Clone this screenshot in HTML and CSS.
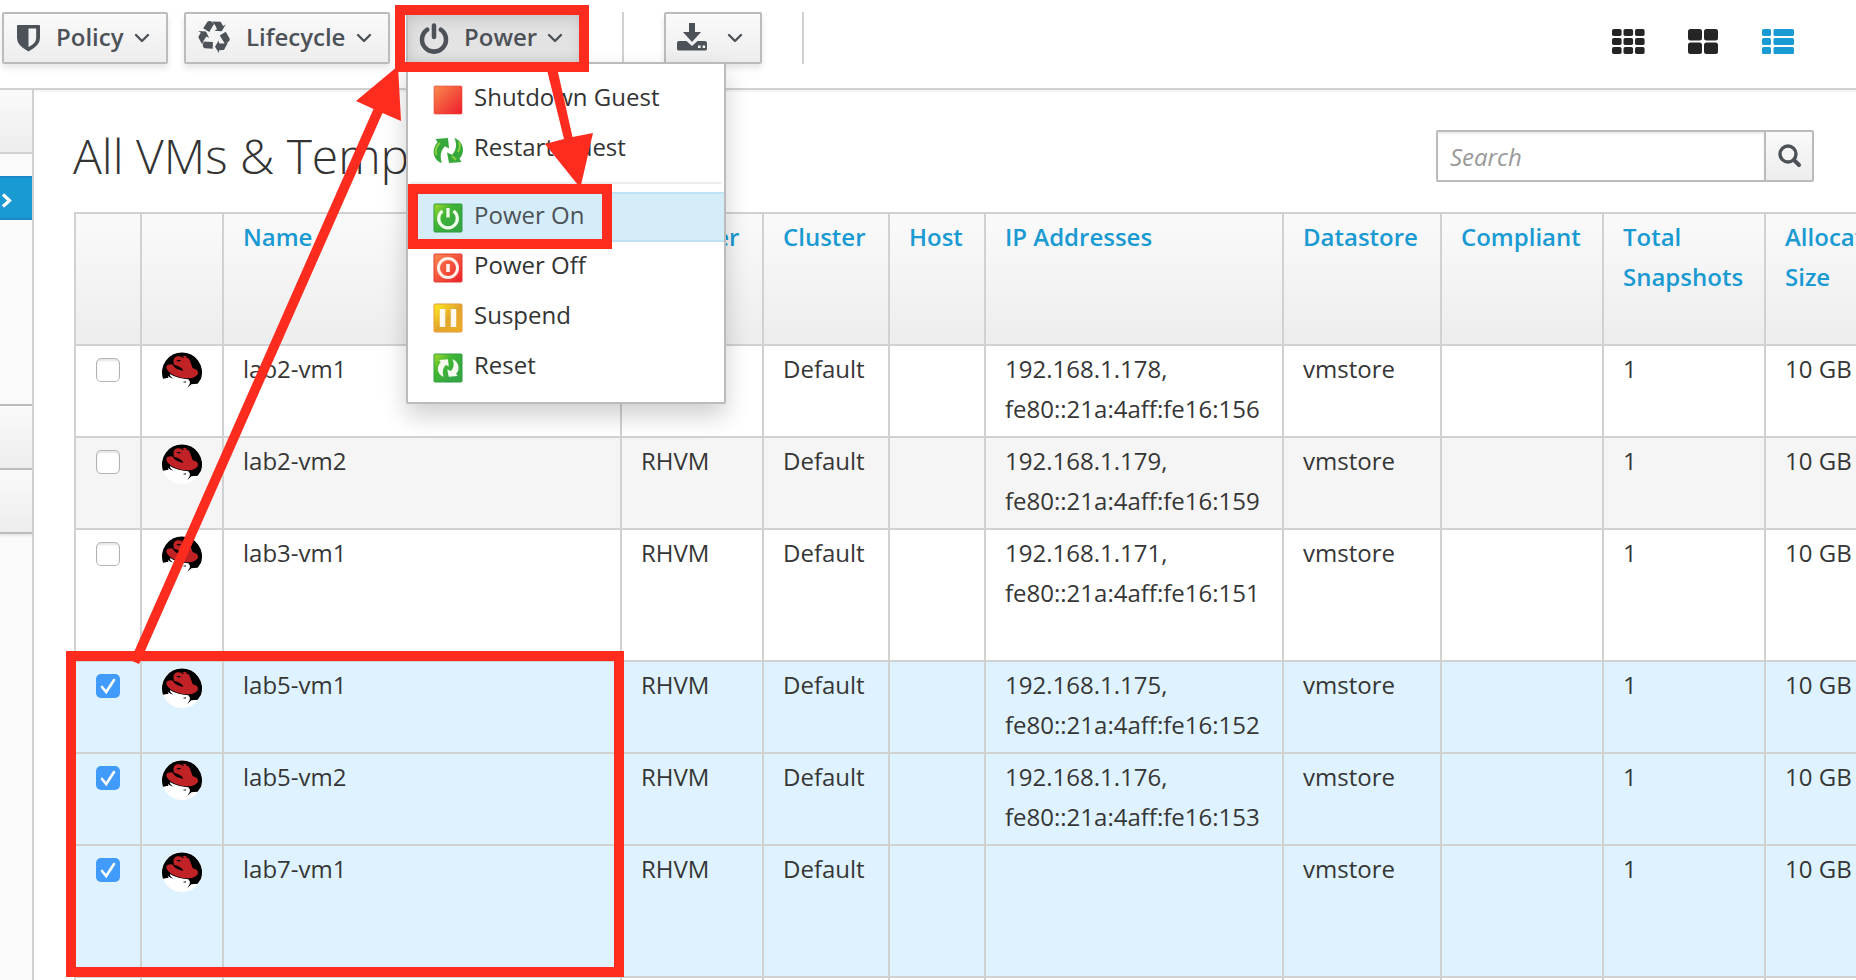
FILE: index.html
```html
<!DOCTYPE html>
<html lang="en">
<head>
<meta charset="utf-8">
<title>All VMs &amp; Templates</title>
<link rel="stylesheet" href="styles.css">
</head>
<body>
<svg class="defs" aria-hidden="true">
  <defs>
    <linearGradient id="g-red" x1="0" y1="0" x2="1" y2="1"><stop offset="0" stop-color="#f98a4e"/><stop offset="1" stop-color="#ee1c2c"/></linearGradient>
    <linearGradient id="g-green" x1="0" y1="0" x2=".8" y2=".7"><stop offset="0" stop-color="#a6dc2c"/><stop offset=".5" stop-color="#3fb533"/><stop offset="1" stop-color="#37a744"/></linearGradient>
    <linearGradient id="g-gold" x1="0" y1="0" x2="1" y2="1"><stop offset="0" stop-color="#fdf01e"/><stop offset=".5" stop-color="#e2a52c"/><stop offset="1" stop-color="#edae26"/></linearGradient>
    <symbol id="chev" viewBox="0 0 16 10"><path d="M2 2l6 6 6-6" fill="none" stroke="#4d5258" stroke-width="2.4" stroke-linecap="round" stroke-linejoin="round"/></symbol>
    <symbol id="hat" viewBox="0 0 120 120">
      <circle cx="60" cy="60" r="60" fill="#fff"/>
      <path d="M3 80A60 60 0 1 1 117 80L107 95 96 96 88 97 76 108 83 96 84 89 79 82 66 80 50 77 35 72 24 66 25 72 33 80 23 76 19 71 19 77Z" fill="#000"/>
      <path d="M37 39C32 27 35 17 42 14 51 10 57 17 66 12 76 10 80 19 84 26L92 49C99 50 109 55 108 62 107 72 92 80 74 79 49 78 20 65 14 50 11 42 16 38 25 37Z" fill="#c02226"/>
      <path d="M33 38C46 39 62 48 64 56 52 54 38 50 33 38ZM42 25L59 24 50 29ZM57 13l5 6 4-3zM70 14l9 1-3 4z" fill="#000"/>
      <path d="M62 90l10-2-1 4z" fill="#000"/>
    </symbol>
    <symbol id="cycle" viewBox="0 0 30 26">
      <path d="M9 25C0 22-1 11 5 5L3 2 15 1 16 11 12 9C8 13 7 18 9 25Z"/>
      <path d="M21 1C30 4 32 15 26 21L28 24 16 25 14 15 19 17C23 13 24 7 21 1Z"/>
    </symbol>
  </defs>
</svg>

<div class="app">
  <header class="toolbar">
    <button class="btn policy"><svg class="ico-shield" viewBox="0 0 24 28"><path d="M0 1.500q0-1 1-1h22q1 0 1 1V14q0 8-12 14Q0 22 0 14ZM12 4v19.500q8-4 8-9.500V4Z" fill="#4d5258" fill-rule="evenodd"/></svg><span>Policy</span><svg class="chev"><use href="#chev"/></svg></button>
    <button class="btn lifecycle"><svg class="ico-recycle" viewBox="0 0 1792 1792"><path fill="#4d5258" d="M836 1169l-15 368-2 22-420-29q-36-3-67-31.500t-47-65.500q-11-27-14.500-55t4-65 12-55 21.500-64 19-53q78 12 509 28zM449 583l180 379-147-92q-63 72-111.500 144.500t-72.500 125-39.500 94.500-18.500 63l-4 21-190-357q-17-26-18-56t6-47l8-18q35-63 114-188l-140-86zM1680 1200l-188 359q-12 29-36.500 46.500t-43.500 20.500l-18 4q-71 7-219 12l8 164-230-367 211-362 7 173q170 16 283 5t170-33zM895 176q-47 63-265 435l-317-187-19-12 225-356q20-31 60-45t80-10q24 2 48.500 12t42 21 41.500 33 36 34.500 36 39.500 32 35zM1550 600l212 363q18 37 12.500 76t-27.500 74q-13 20-33 37t-38 28-48.500 22-47 16-51.500 14-46 12q-34-72-265-436l313-195zM1407 279l142-83-220 373-419-20 151-86q-34-89-75-166t-75.500-123.500-64.500-80-47-46.500l-17-13 405 1q31-3 58 10.500t39 28.500l11 15q39 61 112 190z"/></svg><span>Lifecycle</span><svg class="chev"><use href="#chev"/></svg></button>
    <div class="dropdown">
      <button class="btn power"><svg class="ico-power" viewBox="0 0 28 30"><path d="M7.500 6.500a11.600 11.600 0 1 0 13 0M14 2.500v11" fill="none" stroke="#4d5258" stroke-width="4.400" stroke-linecap="round"/></svg><span>Power</span><svg class="chev"><use href="#chev"/></svg></button>
      <ul class="menu">
        <li><svg class="mi" viewBox="0 0 30 30"><rect x="1" y="1" width="28" height="28" rx="1" fill="url(#g-red)" stroke="#e8442f" stroke-opacity=".6"/></svg>Shutdown Guest</li>
        <li><svg class="mi" viewBox="0 0 30 30"><use href="#cycle" x="-1" y="2" width="32" height="27" fill="#36a83b"/><path d="M3.500 20Q1 13 7 8M19 21l4 4M26 7q2 5-1 10" fill="none" stroke="#8bd03c" stroke-width="2"/></svg>Restart Guest</li>
        <li class="rule"></li>
        <li class="on"><svg class="mi" viewBox="0 0 30 30"><rect x="1" y="1" width="28" height="28" rx="1" fill="url(#g-green)" stroke="#2c9b3e"/><path d="M9.500 8a9.300 9.300 0 1 0 11 0M15 5v9.500" fill="none" stroke="#f1fbe9" stroke-width="3.300"/></svg>Power On</li>
        <li><svg class="mi" viewBox="0 0 30 30"><rect x="1" y="1" width="28" height="28" rx="1" fill="url(#g-red)" stroke="#e63a30"/><circle cx="15" cy="15" r="9.500" fill="none" stroke="#fff1ea" stroke-width="3"/><path d="M15 11v8" stroke="#fff1ea" stroke-width="3.600"/></svg>Power Off</li>
        <li><svg class="mi" viewBox="0 0 30 30"><rect x="1" y="1" width="28" height="28" rx="1" fill="url(#g-gold)" stroke="#e7983a"/><path d="M9.500 6v18M20.500 6v18" stroke="#fff8ee" stroke-width="5.500"/></svg>Suspend</li>
        <li><svg class="mi" viewBox="0 0 30 30"><rect x="1" y="1" width="28" height="28" rx="1" fill="url(#g-green)" stroke="#2c9b3e"/><use href="#cycle" x="4" y="5" width="22" height="20" fill="#f4fbee"/></svg>Reset</li>
      </ul>
    </div>
    <i class="sep s1"></i>
    <button class="btn download"><svg class="ico-dl" viewBox="0 0 30 28" fill="#4d5258"><path d="M12 0h6v9h6l-9 10L6 9h6Z"/><path fill-rule="evenodd" d="M2 18h7.500l5.500 5 5.500-5H28q2 0 2 2v6q0 1.500-2 1.500H2q-2 0-2-1.500v-6q0-2 2-2Zm19 4.500v2.600h2.600v-2.600Zm4.600 0v2.600h2.600v-2.600Z"/></svg><svg class="chev"><use href="#chev"/></svg></button>
    <i class="sep s2"></i>
    <nav class="views">
      <svg width="33" height="26" viewBox="0 0 33 26" fill="#252525"><rect width="9.600" height="7" rx="1.800"/><rect x="11.500" width="9.600" height="7" rx="1.800"/><rect x="23" width="9.600" height="7" rx="1.800"/><rect y="9" width="9.600" height="7" rx="1.800"/><rect x="11.500" y="9" width="9.600" height="7" rx="1.800"/><rect x="23" y="9" width="9.600" height="7" rx="1.800"/><rect y="18" width="9.600" height="7" rx="1.800"/><rect x="11.500" y="18" width="9.600" height="7" rx="1.800"/><rect x="23" y="18" width="9.600" height="7" rx="1.800"/></svg>
      <svg width="31" height="26" viewBox="0 0 31 26" fill="#252525"><rect width="14" height="11.600" rx="2.500"/><rect x="16" width="14" height="11.600" rx="2.500"/><rect y="13.400" width="14" height="11.600" rx="2.500"/><rect x="16" y="13.400" width="14" height="11.600" rx="2.500"/></svg>
      <svg width="33" height="26" viewBox="0 0 33 26" fill="#1a9ad3"><rect width="9" height="7" rx="1.500"/><rect x="11.500" width="20.500" height="7" rx="1.500"/><rect y="9" width="9" height="7" rx="1.500"/><rect x="11.500" y="9" width="20.500" height="7" rx="1.500"/><rect y="18" width="9" height="7" rx="1.500"/><rect x="11.500" y="18" width="20.500" height="7" rx="1.500"/></svg>
    </nav>
  </header>

  <div class="body">
    <aside class="side">
      <div class="acc first"></div>
      <div class="gap"></div>
      <div class="active"><svg width="12" height="16" viewBox="0 0 12 16"><path d="M2 2.500L8.500 8.500 2 14.500" fill="none" stroke="#fff" stroke-width="3.200"/></svg></div>
      <div class="tree"></div>
      <div class="acc second"></div>
      <div class="acc third"></div>
    </aside>
    <main class="main">
      <div class="head">
        <h1>All VMs &amp; Templates</h1>
        <div class="search"><span class="field">Search</span><span class="go"><svg width="24" height="24" viewBox="0 0 24 24"><circle cx="10" cy="10" r="8" fill="none" stroke="#4d5258" stroke-width="3.400"/><path d="M16 16l5 5" stroke="#4d5258" stroke-width="4" stroke-linecap="round"/></svg></span></div>
      </div>
      <table class="grid">
        <colgroup><col class="c0"><col class="c1"><col class="c2"><col class="c3"><col class="c4"><col class="c5"><col class="c6"><col class="c7"><col class="c8"><col class="c8"><col class="c8"></colgroup>
        <thead><tr><th></th><th></th><th>Name</th><th>Provider</th><th>Cluster</th><th>Host</th><th>IP Addresses</th><th>Datastore</th><th>Compliant</th><th>Total Snapshots</th><th>Allocated Size</th></tr></thead>
        <tbody>
          <tr><td class="k"><i class="cb"></i></td><td class="k"><svg class="os"><use href="#hat"/></svg></td><td>lab2-vm1</td><td>RHVM</td><td>Default</td><td></td><td>192.168.1.178, fe80::21a:4aff:fe16:156</td><td>vmstore</td><td></td><td>1</td><td>10 GB</td></tr>
          <tr class="alt"><td class="k"><i class="cb"></i></td><td class="k"><svg class="os"><use href="#hat"/></svg></td><td>lab2-vm2</td><td>RHVM</td><td>Default</td><td></td><td>192.168.1.179, fe80::21a:4aff:fe16:159</td><td>vmstore</td><td></td><td>1</td><td>10 GB</td></tr>
          <tr class="tall"><td class="k"><i class="cb"></i></td><td class="k"><svg class="os"><use href="#hat"/></svg></td><td>lab3-vm1</td><td>RHVM</td><td>Default</td><td></td><td>192.168.1.171, fe80::21a:4aff:fe16:151</td><td>vmstore</td><td></td><td>1</td><td>10 GB</td></tr>
          <tr class="sel"><td class="k"><i class="cb ck"><svg viewBox="0 0 24 24"><path d="M6 13l4.200 5L18 6" /></svg></i></td><td class="k"><svg class="os"><use href="#hat"/></svg></td><td>lab5-vm1</td><td>RHVM</td><td>Default</td><td></td><td>192.168.1.175, fe80::21a:4aff:fe16:152</td><td>vmstore</td><td></td><td>1</td><td>10 GB</td></tr>
          <tr class="sel"><td class="k"><i class="cb ck"><svg viewBox="0 0 24 24"><path d="M6 13l4.200 5L18 6" /></svg></i></td><td class="k"><svg class="os"><use href="#hat"/></svg></td><td>lab5-vm2</td><td>RHVM</td><td>Default</td><td></td><td>192.168.1.176, fe80::21a:4aff:fe16:153</td><td>vmstore</td><td></td><td>1</td><td>10 GB</td></tr>
          <tr class="sel tall"><td class="k"><i class="cb ck"><svg viewBox="0 0 24 24"><path d="M6 13l4.200 5L18 6" /></svg></i></td><td class="k"><svg class="os"><use href="#hat"/></svg></td><td>lab7-vm1</td><td>RHVM</td><td>Default</td><td></td><td></td><td>vmstore</td><td></td><td>1</td><td>10 GB</td></tr>
          <tr><td></td><td></td><td></td><td></td><td></td><td></td><td></td><td></td><td></td><td></td><td></td></tr>
        </tbody>
      </table>
    </main>
  </div>

  <svg class="marks" width="1856" height="980" viewBox="0 0 1856 980" aria-hidden="true">
    <g fill="none" stroke="#fe2c1e" stroke-width="10"><rect x="400" y="10" width="184" height="57"/><rect x="413" y="189" width="194" height="55"/><rect x="71" y="656" width="548" height="316"/></g>
    <g fill="#fe2c1e"><path d="M134.500 651L132 661 139 664 145 651 382.500 113 401 121 398 66 356 101 373.500 109Z"/><path d="M547 70H557.500L572.500 137 593 133 581 185H578L545 144 564 139Z"/></g>
  </svg>
</div>
</body>
</html>
```

FILE: styles.css
```css
* { box-sizing: border-box; }
body { margin: 0; background: #fff; color: #363636; font: 24px/40px "Open Sans", "Noto Sans", sans-serif; }
.defs { position: absolute; width: 0; height: 0; }
.app { position: relative; width: 1856px; height: 980px; overflow: hidden; }

.toolbar { display: flex; align-items: flex-start; height: 90px; padding: 12px 61px 0 2px; border-bottom: 2px solid #d1d1d1; }
.btn { display: flex; align-items: center; height: 52px; padding: 0 16px 0 13px; border: 2px solid #bbb; border-radius: 2px; background: linear-gradient(#fafafa, #ededed); box-shadow: 0 4px 6px rgba(3, 3, 3, .1); color: #4d5258; font: 600 24px/36px "Open Sans", sans-serif; }
.btn span { position: relative; top: -1px; }
.chev { width: 16px; height: 10px; margin-left: auto; flex: none; }
.policy { width: 166px; }
.ico-shield { width: 23px; height: 28px; margin-right: 16px; }
.lifecycle { width: 206px; margin-left: 16px; padding-left: 12px; }
.ico-recycle { width: 32px; height: 32px; margin: -2px 16px 0 0; }
.dropdown { position: relative; margin-left: 16px; }
.power { width: 178px; padding-left: 11px; background: #e3e3e3; box-shadow: inset 0 4px 16px rgba(0, 0, 0, .15); }
.ico-power { width: 30px; height: 31px; margin-right: 15px; }
.power .chev { margin-right: 3px; }
.sep { width: 2px; height: 52px; background: #d1d1d1; }
.s1 { margin-left: 38px; }
.download { width: 98px; margin-left: 40px; padding-left: 11px; }
.download .chev { margin-right: 1px; }
.ico-dl { width: 30px; height: 28px; margin-top: -2px; }
.s2 { margin-left: 40px; }
.views { display: flex; gap: 43px; margin: 17px 0 0 auto; }

.menu { position: absolute; z-index: 2; top: 50px; left: 0; width: 320px; height: 342px; margin: 0; padding: 10px 0; list-style: none; border: 2px solid #bbb; border-radius: 2px; background: #fff; box-shadow: 0 12px 24px rgba(0, 0, 0, .19); }
.menu li { display: flex; align-items: flex-start; height: 50px; padding: 3px 0 0 25px; gap: 11px; color: #333; white-space: nowrap; }
.menu .mi { width: 30px; height: 30px; margin-top: 8px; }
.menu .rule { height: 2px; margin: 8px 2px; padding: 0; background: #ededed; }
.menu .on { padding-top: 1px; border: solid #bee1f4; border-width: 2px 0; background: #d4edf8; color: #4d5258; }

.body { display: flex; height: 890px; }
.side { width: 34px; flex: none; border-right: 2px solid #d1d1d1; background: #fafafa; }
.acc { height: 64px; border-bottom: 2px solid #bbb; background: linear-gradient(#fafafa, #ededed); }
.first { border-color: #d1d1d1; }
.gap { height: 22px; }
.active { height: 44px; padding: 14px 0 0 1px; border: solid #1a87c9; border-width: 2px 0; background: #1a9ad3; line-height: 0; }
.tree { height: 186px; border-bottom: 2px solid #bbb; }
.third { box-shadow: 0 2px 2px rgba(0, 0, 0, .08); }
.main { width: 1822px; flex: none; padding-left: 40px; border-top: 2px solid #f5f5f5; overflow: hidden; }
.head { display: flex; justify-content: space-between; height: 120px; padding-right: 42px; }
h1 { margin: 34px 0 0 -1px; font-size: 48px; font-weight: 300; line-height: 60px; color: #333; }
.search { display: flex; width: 378px; height: 52px; margin-top: 38px; border: 2px solid #bbb; border-radius: 2px; }
.field { flex: 1; padding: 5px 12px; box-shadow: inset 0 2px 2px rgba(3, 3, 3, .075); color: #999; font-style: italic; }
.go { display: flex; align-items: center; justify-content: center; width: 48px; border-left: 2px solid #bbb; background: linear-gradient(#fafafa, #ededed); }
.go svg { margin-left: 1px; }

.grid { width: 1854px; table-layout: fixed; border-spacing: 0; border: solid #d1d1d1; border-width: 2px 0 0 2px; }
.c0 { width: 66px; } .c1 { width: 82px; } .c2 { width: 398px; } .c3 { width: 142px; } .c4 { width: 126px; } .c5 { width: 96px; }
.c6 { width: 298px; } .c7 { width: 158px; } .c8 { width: 162px; }
th, td { padding: 3px 18px 0 19px; border: solid #d1d1d1; border-width: 0 2px 2px 0; text-align: left; vertical-align: top; }
th { height: 132px; color: #1a9ad3; font-weight: 600; }
thead { background: linear-gradient(#fafafa, #ededed); }
td { height: 92px; }
.tall td { height: 132px; }
.alt { background: #f5f5f5; }
.sel { background: #def3ff; }
td.k { padding: 12px 0 0 20px; line-height: 0; }
.k .os { width: 40px; height: 40px; margin-top: -6px; }
.cb { display: block; width: 24px; height: 24px; border: 1px solid #b4b4b4; border-radius: 5px; background: #fff; box-shadow: inset 0 2px 2px rgba(0, 0, 0, .1); }
.ck { border: 0; background: #419bfb; box-shadow: none; }
.ck path { fill: none; stroke: #fff; stroke-width: 2.6; stroke-linecap: round; }

.marks { position: absolute; z-index: 3; top: 0; left: 0; pointer-events: none; }
```
